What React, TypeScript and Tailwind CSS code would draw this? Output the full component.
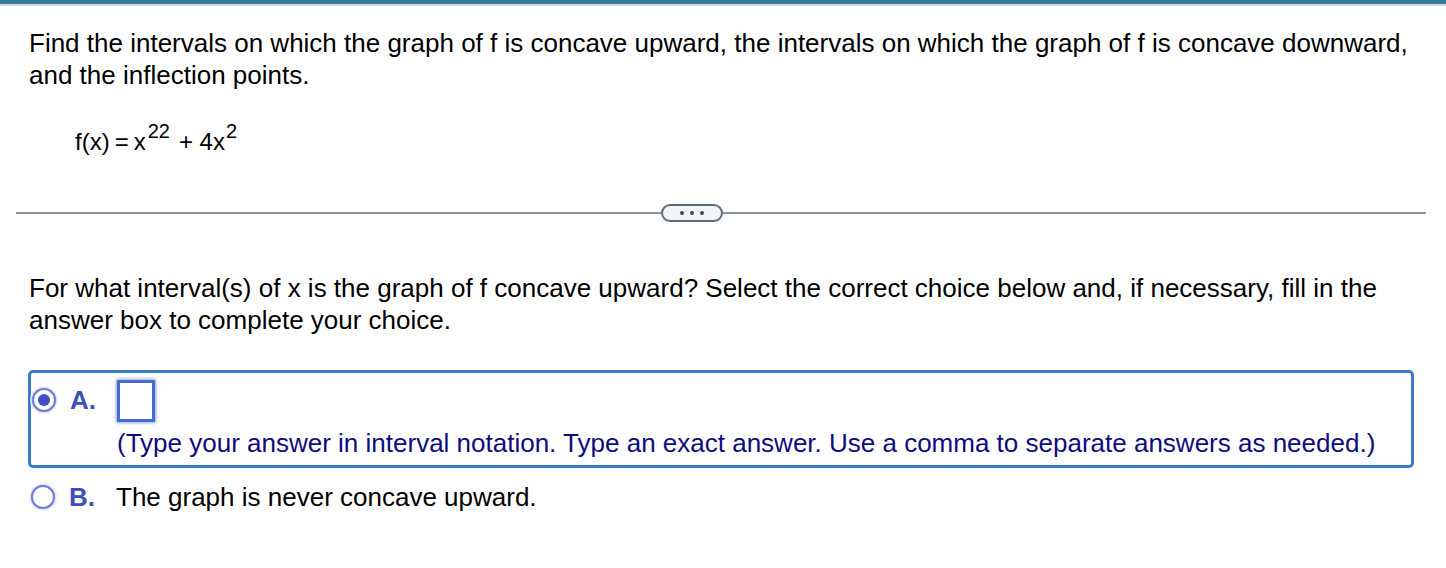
import React from "react";

function Radio({ checked }: { checked?: boolean }) {
  return (
    <div className="relative w-[28px] h-[28px] shrink-0 flex items-center justify-center">
      <div className="absolute inset-0 rounded-full bg-[#eef0fa] opacity-70" />
      <div className="relative w-[24px] h-[24px] rounded-full border-[2.5px] border-[#6f7fd6] bg-white flex items-center justify-center shadow-[0_0_2px_rgba(90,110,210,0.5)]">
        {checked && <div className="w-[12px] h-[12px] rounded-full bg-[#3d4fc2]" />}
      </div>
    </div>
  );
}

export default function App() {
  return (
    <div className="w-[1446px] h-[568px] bg-white overflow-hidden font-['Liberation_Sans',Arial,sans-serif] text-black">
      <div className="h-[4px] bg-[#357a9b]" />
      <div className="h-[2px] bg-[#d2d6dd]" />
      <div className="pl-[29px] pr-[10px] pt-[21px]">
        <p className="text-[26px] leading-[32px] whitespace-nowrap">
          Find the intervals on which the graph of f is concave upward, the intervals on which the graph of f is concave downward,
          <br />
          and the inflection points.
        </p>
        <div className="mt-[36px] pl-[46px] text-[24px] leading-[30px] h-[30px] whitespace-nowrap">
          f(x)<span className="mx-[5px]">=</span>x<span className="ml-[2px] text-[20px] relative top-[-12px]">22</span>
          <span className="ml-[9px]">+ 4x</span>
          <span className="ml-[1px] text-[20px] relative top-[-12px]">2</span>
        </div>
      </div>
      <div className="mt-[47px] ml-[16px] w-[1410px] flex items-center">
        <div className="w-[645px] h-[2px] bg-[#8a929e]" />
        <div className="w-[62px] h-[18px] rounded-full border-2 border-[#5e6a78] bg-[#f3f4f6] flex items-center justify-center gap-[6px]">
          <span className="w-[4px] h-[4px] rounded-full bg-[#3f4855]" />
          <span className="w-[4px] h-[4px] rounded-full bg-[#3f4855]" />
          <span className="w-[4px] h-[4px] rounded-full bg-[#3f4855]" />
        </div>
        <div className="flex-1 h-[2px] bg-[#8a929e]" />
      </div>
      <div className="pl-[29px] pr-[10px] mt-[50px]">
        <p className="text-[26px] leading-[32px] whitespace-nowrap">
          For what interval(s) of x is the graph of f concave upward? Select the correct choice below and, if necessary, fill in the
          <br />
          answer box to complete your choice.
        </p>
      </div>
      <div className="ml-[28px] mt-[34px] w-[1386px] h-[98px] border-[3px] border-[#3b7cc8] rounded-[5px] flex pt-[7px]">
        <div className="mt-[6px] -ml-[1px]">
          <Radio checked />
        </div>
        <div className="ml-[12px] mt-[6px] w-[47px] text-[26px] leading-[28px] font-bold text-[#3c50b8]">A.</div>
        <div className="flex flex-col">
          <div className="w-[38px] h-[42px] border-[3px] border-[#4a6ad0] shadow-[0_0_3px_1px_rgba(74,106,208,0.6)] bg-white" />
          <div className="mt-[5px] text-[26px] leading-[32px] text-[#0c0c80] whitespace-nowrap">
            (Type your answer in interval notation. Type an exact answer. Use a comma to separate answers as needed.)
          </div>
        </div>
      </div>
      <div className="ml-[29px] mt-[14px] flex items-center h-[30px]">
        <Radio />
        <div className="ml-[12px] w-[47px] text-[26px] leading-[28px] font-bold text-[#3c50b8]">B.</div>
        <div className="text-[26px] leading-[28px]">The graph is never concave upward.</div>
      </div>
    </div>
  );
}
